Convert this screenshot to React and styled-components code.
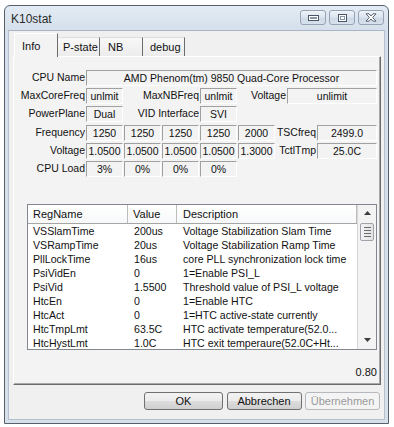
import React from "react"
import styled, { createGlobalStyle } from "styled-components"

const GlobalStyle = createGlobalStyle`
  html, body {
    margin: 0;
    padding: 0;
    background: #ffffff;
  }
  body {
    font-family: "Liberation Sans", Arial, sans-serif;
    font-size: 10.5px;
    color: #111;
  }
`

const Page = styled.div`
  width: 394px;
  height: 427px;
  box-sizing: border-box;
  padding: 5px 0 0 4px;
`

const Window = styled.div`
  width: 385px;
  height: 419px;
  box-sizing: border-box;
  border: 1px solid #56606c;
  border-radius: 6px 6px 0 0;
  background: linear-gradient(#e3ebf4, #d4dfeb 26px, #d6e0eb);
  padding: 0 3px 3px;
  display: flex;
  flex-direction: column;
`

const TitleBar = styled.div`
  height: 24px;
  flex: none;
  display: flex;
  justify-content: space-between;
  align-items: flex-start;
`

const Title = styled.div`
  padding: 6px 0 0 3px;
  font-size: 12px;
  color: #2b2b2b;
`

const Captions = styled.div`
  display: flex;
  gap: 3px;
  margin-top: 4px;
  margin-right: 1px;
`

const CaptionButton = styled.div`
  width: 26px;
  height: 15px;
  box-sizing: border-box;
  border: 1px solid #95a3b4;
  border-radius: 3px;
  background: linear-gradient(#f0f4f9, #dae3ee 50%, #ccd8e6 51%, #d8e2ee);
  display: flex;
  align-items: center;
  justify-content: center;
`

const Client = styled.div`
  flex: 1;
  background: #f0f0f0;
  border: 1px solid #b4c0ce;
  border-top-color: #a9b6c6;
  display: flex;
  flex-direction: column;
  padding: 2px 0 0 4px;
`

const TabRow = styled.div`
  display: flex;
  align-items: flex-end;
  height: 23px;
  margin-left: 1px;
  position: relative;
  z-index: 1;
`

const Tab = styled.div`
  width: ${(p) => p.$w}px;
  height: ${(p) => (p.$active ? 24 : 19)}px;
  margin-bottom: ${(p) => (p.$active ? -1 : 0)}px;
  box-sizing: border-box;
  padding: ${(p) => (p.$active ? "6px" : "3px")} 0 0 ${(p) => p.$pad}px;
  background: ${(p) => (p.$active ? "#f3f3f3" : "linear-gradient(#f8f8f8, #ececec)")};
  border-top: 1px solid ${(p) => (p.$active ? "#ffffff" : "#dcdcdc")};
  border-left: 1px solid ${(p) => (p.$active ? "#ffffff" : "transparent")};
  border-right: 1px solid #6c6c6c;
  font-size: 11px;
  white-space: nowrap;
`

const Panel = styled.div`
  width: 368px;
  height: 329px;
  box-sizing: border-box;
  background: #f3f3f3;
  border-top: 1px solid #ffffff;
  border-left: 1px solid #ffffff;
  border-right: 1px solid #6c6c6c;
  border-bottom: 1px solid #6c6c6c;
  box-shadow: inset -1px -1px 0 #a8a8a8;
  padding: 13px 0 0 0;
  display: flex;
  flex-direction: column;
`

const InfoRows = styled.div`
  display: flex;
  flex-direction: column;
  gap: 2.2px;
`

const Row = styled.div`
  display: flex;
  align-items: stretch;
  height: 16px;
`

const Label = styled.div`
  width: ${(p) => p.$w}px;
  flex: none;
  box-sizing: border-box;
  padding-right: 1px;
  text-align: right;
  line-height: 15px;
  white-space: nowrap;
`

const Field = styled.div`
  width: ${(p) => p.$w}px;
  flex: none;
  box-sizing: border-box;
  margin-right: ${(p) => p.$gap || 0}px;
  border-top: 1px solid #a0a0a0;
  border-left: 1px solid #a0a0a0;
  border-bottom: 1px solid #ffffff;
  border-right: 1px solid #ffffff;
  text-align: center;
  line-height: 15px;
  white-space: nowrap;
  overflow: hidden;
`

const ListView = styled.div`
  margin: 27px 0 0 13px;
  width: 350px;
  height: 146px;
  box-sizing: border-box;
  border: 1px solid #828790;
  background: #ffffff;
  display: flex;
`

const Table = styled.div`
  width: 329px;
  display: flex;
  flex-direction: column;
`

const Header = styled.div`
  display: flex;
  height: 19px;
  box-sizing: border-box;
  border-bottom: 1px solid #a5a5a5;
  background: linear-gradient(#ffffff, #f7f8f9);
`

const HeadCell = styled.div`
  width: ${(p) => p.$w}px;
  box-sizing: border-box;
  padding-left: ${(p) => p.$pad}px;
  border-right: 1px solid #bdbdbd;
  line-height: 19px;
  font-size: 11px;
`

const ItemRow = styled.div`
  display: flex;
  height: 14px;
`

const Cell = styled.div`
  width: ${(p) => p.$w}px;
  box-sizing: border-box;
  padding-left: ${(p) => p.$pad}px;
  line-height: 14px;
  font-size: 10.6px;
  white-space: nowrap;
  overflow: hidden;
`

const ScrollBar = styled.div`
  flex: 1;
  border-left: 1px solid #d6d6d6;
  background: #f3f3f3;
  display: flex;
  flex-direction: column;
  align-items: center;
`

const Arrow = styled.div`
  height: 17px;
  width: 100%;
  display: flex;
  align-items: center;
  justify-content: center;
`

const Track = styled.div`
  flex: 1;
  width: 100%;
  display: flex;
  justify-content: center;
  padding-top: 1px;
`

const Thumb = styled.div`
  width: 14px;
  height: 18px;
  box-sizing: border-box;
  border: 1px solid #a0a4aa;
  border-radius: 2px;
  background: linear-gradient(90deg, #f4f4f4, #e2e2e2);
  display: flex;
  flex-direction: column;
  align-items: center;
  justify-content: center;
  gap: 2px;
`

const Grip = styled.div`
  width: 7px;
  height: 1px;
  background: #6d6d6d;
`

const Version = styled.div`
  margin-top: 16px;
  padding-right: 3px;
  text-align: right;
  font-size: 11px;
`

const ButtonRow = styled.div`
  display: flex;
  justify-content: flex-end;
  gap: 3.5px;
  margin-top: 7px;
  padding-right: 4px;
`

const Button = styled.div`
  width: ${(p) => p.$w}px;
  height: 18px;
  box-sizing: border-box;
  border: 1px solid ${(p) => (p.$disabled ? "#b5b9bd" : "#707070")};
  border-radius: 3px;
  background: ${(p) =>
    p.$disabled ? "#f4f4f4" : "linear-gradient(#f3f3f3, #ebebeb 50%, #dddddd 51%, #cfcfcf)"};
  color: ${(p) => (p.$disabled ? "#9a9a9a" : "#111")};
  text-align: center;
  line-height: 16px;
  font-size: 11px;
`

const regs = [
  ["VSSlamTime", "200us", "Voltage Stabilization Slam Time"],
  ["VSRampTime", "20us", "Voltage Stabilization Ramp Time"],
  ["PllLockTime", "16us", "core PLL synchronization lock time"],
  ["PsiVidEn", "0", "1=Enable PSI_L"],
  ["PsiVid", "1.5500", "Threshold value of PSI_L voltage"],
  ["HtcEn", "0", "1=Enable HTC"],
  ["HtcAct", "0", "1=HTC active-state currently"],
  ["HtcTmpLmt", "63.5C", "HTC activate temperature(52.0..."],
  ["HtcHystLmt", "1.0C", "HTC exit temperaure(52.0C+Ht..."],
]

const cols = [100, 49, 180]

function Cells({ values, w = 37, gap = 1 }) {
  return values.map((v, i) => (
    <Field key={i} $w={w} $gap={gap}>
      {v}
    </Field>
  ))
}

export default function App() {
  return (
    <Page>
      <GlobalStyle />
      <Window>
        <TitleBar>
          <Title>K10stat</Title>
          <Captions>
            <CaptionButton>
              <svg width="11" height="6" viewBox="0 0 11 6">
                <rect x="0.5" y="0.5" width="10" height="5" fill="#fff" stroke="#4a5566" />
                <rect x="2" y="2" width="7" height="2" fill="#8796a8" />
              </svg>
            </CaptionButton>
            <CaptionButton>
              <svg width="9" height="8" viewBox="0 0 9 8">
                <rect x="0.5" y="0.5" width="8" height="7" fill="#fff" stroke="#4a5566" />
                <rect x="2" y="2" width="5" height="4" fill="#8796a8" />
                <rect x="3" y="3" width="3" height="2" fill="#fff" />
              </svg>
            </CaptionButton>
            <CaptionButton>
              <svg width="12" height="9" viewBox="0 0 12 9">
                <path
                  d="M1 0.8 H4 L6 3 L8 0.8 H11 L7.6 4.5 L11 8.2 H8 L6 6 L4 8.2 H1 L4.4 4.5 Z"
                  fill="#fff"
                  stroke="#4a5566"
                  strokeWidth="0.9"
                  strokeLinejoin="round"
                />
              </svg>
            </CaptionButton>
          </Captions>
        </TitleBar>
        <Client>
          <TabRow>
            <Tab $w={44} $pad={7} $active>
              Info
            </Tab>
            <Tab $w={42} $pad={4}>
              P-state
            </Tab>
            <Tab $w={43} $pad={7}>
              NB
            </Tab>
            <Tab $w={42} $pad={6}>
              debug
            </Tab>
          </TabRow>
          <Panel>
            <InfoRows>
              <Row>
                <Label $w={72}>CPU Name</Label>
                <Field $w={291}>AMD Phenom(tm) 9850 Quad-Core Processor</Field>
              </Row>
              <Row>
                <Label $w={72}>MaxCoreFreq</Label>
                <Field $w={37}>unlmit</Field>
                <Label $w={77}>MaxNBFreq</Label>
                <Field $w={37}>unlmit</Field>
                <Label $w={50}>Voltage</Label>
                <Field $w={90}>unlimit</Field>
              </Row>
              <Row>
                <Label $w={72}>PowerPlane</Label>
                <Field $w={37}>Dual</Field>
                <Label $w={77}>VID Interface</Label>
                <Field $w={37}>SVI</Field>
              </Row>
              <Row>
                <Label $w={72}>Frequency</Label>
                <Cells values={["1250", "1250", "1250", "1250", "2000"]} />
                <Label $w={41}>TSCfreq</Label>
                <Field $w={60}>2499.0</Field>
              </Row>
              <Row>
                <Label $w={72}>Voltage</Label>
                <Cells values={["1.0500", "1.0500", "1.0500", "1.0500", "1.3000"]} />
                <Label $w={41}>TctlTmp</Label>
                <Field $w={60}>25.0C</Field>
              </Row>
              <Row>
                <Label $w={72}>CPU Load</Label>
                <Cells values={["3%", "0%", "0%", "0%"]} />
              </Row>
            </InfoRows>

            <ListView>
              <Table>
                <Header>
                  <HeadCell $w={cols[0]} $pad={5}>
                    RegName
                  </HeadCell>
                  <HeadCell $w={cols[1]} $pad={5}>
                    Value
                  </HeadCell>
                  <HeadCell $w={cols[2]} $pad={6}>
                    Description
                  </HeadCell>
                </Header>
                {regs.map(([name, value, desc]) => (
                  <ItemRow key={name}>
                    <Cell $w={cols[0]} $pad={5}>
                      {name}
                    </Cell>
                    <Cell $w={cols[1]} $pad={6}>
                      {value}
                    </Cell>
                    <Cell $w={cols[2]} $pad={6}>
                      {desc}
                    </Cell>
                  </ItemRow>
                ))}
              </Table>
              <ScrollBar>
                <Arrow>
                  <svg width="7" height="4" viewBox="0 0 7 4">
                    <path d="M0 4 L3.5 0 L7 4 Z" fill="#3c3c3c" />
                  </svg>
                </Arrow>
                <Track>
                  <Thumb>
                    <Grip />
                    <Grip />
                    <Grip />
                    <Grip />
                  </Thumb>
                </Track>
                <Arrow>
                  <svg width="7" height="4" viewBox="0 0 7 4">
                    <path d="M0 0 L7 0 L3.5 4 Z" fill="#3c3c3c" />
                  </svg>
                </Arrow>
              </ScrollBar>
            </ListView>

            <Version>0.80</Version>
          </Panel>
          <ButtonRow>
            <Button $w={79}>OK</Button>
            <Button $w={75}>Abbrechen</Button>
            <Button $w={75} $disabled>
              Übernehmen
            </Button>
          </ButtonRow>
        </Client>
      </Window>
    </Page>
  )
}
